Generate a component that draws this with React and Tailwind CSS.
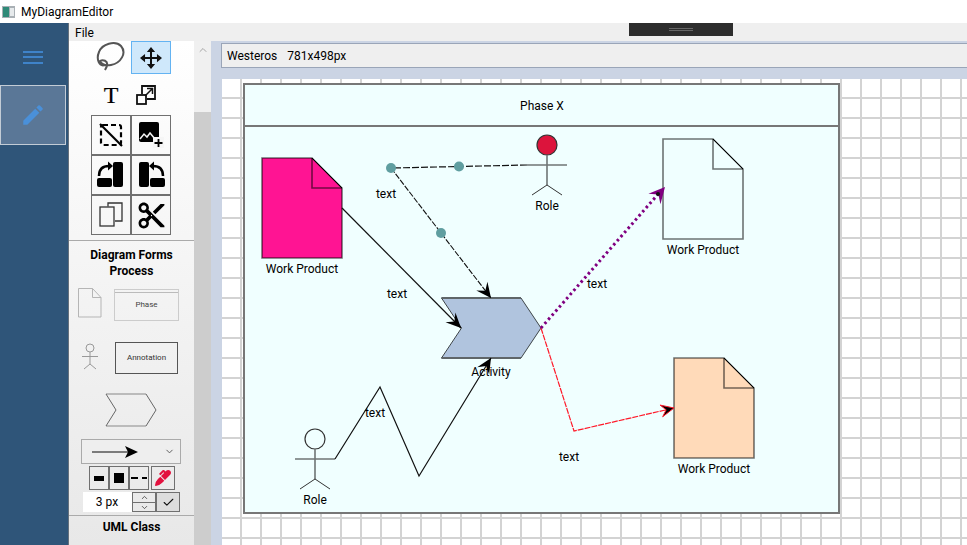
import { MdContentCut, MdEdit } from 'react-icons/md'
import { FaMarker } from 'react-icons/fa'
import { ChevronDown, ChevronUp, Check } from 'lucide-react'

const FONT = '[font-family:Roboto,"Noto_Sans",sans-serif]'

function arrowPoints(tx, ty, fx, fy, len = 15, half = 7) {
  const d = Math.hypot(tx - fx, ty - fy)
  const ux = (tx - fx) / d
  const uy = (ty - fy) / d
  const bx = tx - ux * len
  const by = ty - uy * len
  const nx = tx - ux * len * 0.62
  const ny = ty - uy * len * 0.62
  return `${tx},${ty} ${bx - uy * half},${by + ux * half} ${nx},${ny} ${bx + uy * half},${by - ux * half}`
}

function Doc({ x, y, fill }) {
  return (
    <g>
      <path d={`M${x} ${y}H${x + 50}L${x + 80} ${y + 30}V${y + 100}H${x}Z`} fill={fill} stroke="#000" strokeOpacity="0.55" strokeWidth="1.6" />
      <path d={`M${x + 50} ${y}V${y + 30}H${x + 80}`} fill="none" stroke="#000" strokeOpacity="0.55" strokeWidth="1.6" />
      <path d={`M${x + 50} ${y}L${x + 80} ${y + 30}`} stroke="#000" strokeWidth="1" />
    </g>
  )
}

function Actor({ x, y, fill }) {
  return (
    <g fill="none">
      <circle cx={x} cy={y} r="10" fill={fill} stroke="#333" strokeWidth="1.2" />
      <path d={`M${x} ${y + 10}V${y + 40}M${x - 20} ${y + 20}H${x + 20}`} stroke="#6f7676" strokeWidth="1.6" />
      <path d={`M${x - 15} ${y + 50}L${x} ${y + 40}L${x + 15} ${y + 50}`} stroke="#333" strokeWidth="1" />
    </g>
  )
}

function Diagram() {
  return (
    <svg className="absolute inset-0" width="745" height="466" viewBox="222 79 745 466">
      <rect x="244" y="84" width="595" height="429" fill="#f0ffff" stroke="#777" strokeWidth="2" />
      <path d="M244 126H839" stroke="#777" strokeWidth="2" />
      <Doc x={262} y={158} fill="#ff1493" />
      <Doc x={663} y={139} fill="none" />
      <Doc x={674} y={358} fill="#ffdab9" />
      <path d="M441.5 298H521L541 328L521 358H441.5L461.5 328Z" fill="#b0c4de" stroke="#3f4649" strokeWidth="1" />
      <path d="M441.5 298H521M441.5 358H521" stroke="#5f6669" strokeWidth="1.800" />
      <Actor x={547} y={145} fill="#dc143c" />
      <Actor x={315} y={439} fill="none" />

      <path d="M342 208L461 328" stroke="#111" strokeWidth="1.2" fill="none" />
      <polygon points={arrowPoints(461, 328, 342, 208)} fill="#000" />
      <path d="M527 165L459 166.5L391 168" stroke="#111" strokeWidth="1.2" strokeDasharray="7 2" fill="none" />
      <path d="M391 168L441 233L491 298" stroke="#111" strokeWidth="1.1" strokeDasharray="6 1.5" fill="none" />
      <polygon points={arrowPoints(491, 298, 441, 233)} fill="#000" />
      <circle cx="391" cy="168" r="5" fill="#5f9ea0" />
      <circle cx="459" cy="166.500" r="5" fill="#5f9ea0" />
      <circle cx="441" cy="233" r="5" fill="#5f9ea0" />

      <path d="M335 459L380 387L419 476L491 358" stroke="#111" strokeWidth="1.2" fill="none" />
      <polygon points={arrowPoints(491, 358, 419, 476)} fill="#000" />

      <path d="M541 328L574 431L674 408" stroke="#ff1a2a" strokeWidth="1.2" fill="none" strokeDasharray="6 1" />
      <polygon points={arrowPoints(674, 408, 574, 431, 13, 6)} fill="#000" stroke="#ff1a2a" />

      <path d="M541 328L660 192" stroke="#800080" strokeWidth="3" strokeDasharray="2.500 3" fill="none" />
      <polygon points={arrowPoints(665, 187, 541, 328, 16, 8)} fill="#800080" />
      <circle cx="658" cy="194" r="2" fill="#111" />
    </svg>
  )
}

function Label({ className, children }) {
  return (
    <span className={`absolute -translate-x-1/2 -translate-y-1/2 whitespace-nowrap text-[12px] leading-none text-black ${className}`}>
      {children}
    </span>
  )
}

function Cell({ children, className = '' }) {
  return (
    <div className={`flex h-[40px] w-[40px] items-center justify-center border border-[#707070] text-black ${className}`}>
      {children}
    </div>
  )
}

function Palette() {
  return (
    <div className="flex h-[504px] w-[125px] shrink-0 flex-col overflow-hidden bg-gradient-to-b from-white to-[#e8e8e8]">
      <div className="ml-[22px] flex h-[33px] w-[80px]">
        <div className="flex w-[40px] items-start justify-center">
          <svg width="40" height="30" viewBox="0 0 40 30" fill="none" stroke="#555" strokeWidth="2">
            <path d="M14 24C8 26 5 18 8 11C11 3 24 -1 30 5C36 12 30 22 20 24C15 25 11 24 9 20C12 18 17 20 16 24C16 26 15 27 14 29" />
          </svg>
        </div>
        <div className="flex w-[40px] items-center justify-center border border-[#63b3f2] bg-[#cfe8fb]">
          <svg width="22" height="22" viewBox="0 0 24 24">
            <path d="M12 3V21M3 12H21" stroke="#111" strokeWidth="2.200" />
            <path d="M12 0L7.500 5.500H16.500ZM12 24L7.500 18.500H16.500ZM0 12L5.500 7.500V16.500ZM24 12L18.500 7.500V16.500Z" fill="#111" />
          </svg>
        </div>
      </div>
      <div className="ml-[22px] flex h-[41px] w-[80px]">
        <div className="flex w-[40px] items-center justify-center font-['Liberation_Serif'] text-[24px] leading-none text-black [-webkit-text-stroke:0.2px_black]">T</div>
        <div className="flex w-[30px] items-center justify-center">
          <svg width="22" height="22" viewBox="0 0 22 22" fill="none" stroke="#111" strokeWidth="1.8">
            <path d="M7 10V2H20V15H12" />
            <rect x="2" y="11" width="9" height="9" />
            <path d="M10 12L17 5M12 4.500H17.500V10" strokeWidth="1.500" />
          </svg>
        </div>
      </div>
      <div className="ml-[22px] grid w-[80px] grid-cols-2">
        <Cell>
          <svg width="24" height="24" viewBox="0 0 24 24" fill="none" stroke="#000" strokeWidth="2.200">
            <rect x="2" y="2" width="20" height="20" rx="2" strokeDasharray="5 3" />
            <path d="M1 1L23 23" />
          </svg>
        </Cell>
        <Cell>
          <svg width="26" height="26" viewBox="0 0 26 26">
            <rect x="1" y="0" width="20" height="20" rx="2" fill="#000" />
            <path d="M2 17L6 12L9 15L12 11L17 17" fill="none" stroke="#f6f6f6" strokeWidth="1.500" />
            <rect x="15" y="15" width="11" height="11" fill="#f6f6f6" />
            <path d="M20.500 17V25M16.500 21H24.500" stroke="#000" strokeWidth="1.800" />
          </svg>
        </Cell>
        <Cell>
          <svg width="28" height="28" viewBox="0 0 28 28">
            <rect x="16" y="1" width="10" height="25" rx="2" />
            <rect x="0" y="17" width="15" height="9" rx="2" />
            <path d="M2 15C2 8 6 5 12 5" fill="none" stroke="#000" strokeWidth="2.500" />
            <path d="M11 0.500L16 5L11 9.500Z" />
          </svg>
        </Cell>
        <Cell>
          <svg width="28" height="28" viewBox="0 0 28 28">
            <rect x="2" y="1" width="10" height="25" rx="2" />
            <rect x="13" y="17" width="15" height="9" rx="2" />
            <path d="M26 15C26 8 22 5 16 5" fill="none" stroke="#000" strokeWidth="2.500" />
            <path d="M17 0.500L12 5L17 9.500Z" />
          </svg>
        </Cell>
        <Cell>
          <svg width="24" height="26" viewBox="0 0 24 26" fill="none" stroke="#333" strokeWidth="1.300">
            <path d="M9 4.500V1H23V19H16" />
            <rect x="1" y="5" width="14" height="19" />
          </svg>
        </Cell>
        <Cell><MdContentCut size={31} /></Cell>
      </div>
      <div className="mt-[5px] border-t border-[#aaaaaa]" />
      <div className="pt-[6px] text-center text-[12px] leading-[16px] font-bold text-black">
        <div>Diagram Forms</div>
        <div>Process</div>
      </div>
      <div className="mt-[9px] ml-[9px] flex items-start gap-[12px]">
        <svg width="24" height="30" viewBox="0 0 24 30" fill="none" stroke="#b5b5b5">
          <path d="M.5.500H14.500L23 9.500V29H.5Z" />
          <path d="M14.500.500V9.500H23" />
        </svg>
        <div className="mt-px flex h-[32px] w-[65px] flex-col border border-[#cccccc]">
          <div className="mt-[2px] border-t border-[#bbbbbb]" />
          <div className="flex flex-1 items-center justify-center pb-[3px] text-[8px] text-[#444444]">Phase</div>
        </div>
      </div>
      <div className="mt-[21px] ml-[12px] flex items-center gap-[16px]">
        <svg width="18" height="31" viewBox="0 0 18 31" fill="none" stroke="#999">
          <circle cx="9" cy="5" r="4" />
          <path d="M9 9V21M1 13.500H17" />
          <path d="M3 26L9 21L15 26" />
        </svg>
        <div className="flex h-[32px] w-[63px] items-center justify-center border border-[#555555] text-[8px] text-[#333333]">Annotation</div>
      </div>
      <svg className="mt-[19px] ml-[36px] shrink-0" width="52" height="34" viewBox="0 0 52 34" fill="none">
        <path d="M1 1H41" stroke="#aaa" strokeWidth="1.600" />
        <path d="M1 33H41" stroke="#aaa" strokeWidth="1.600" />
        <path d="M1 1L11 17L1 33M41 1L51 17L41 33" stroke="#666" />
      </svg>
      <div className="mt-[12px] ml-[12px] flex h-[25px] w-[100px] shrink-0 items-center border border-[#aaaaaa] bg-[#eeeeee]">
        <svg className="ml-[9px]" width="48" height="14" viewBox="0 0 48 14">
          <path d="M1 7H38" stroke="#555" strokeWidth="1.500" />
          <path d="M47 7L34 1L37 7L34 13Z" fill="#000" />
        </svg>
        <ChevronDown className="ml-auto mr-[5px]" size={11} color="#555" />
      </div>
      <div className="mt-[2px] ml-[20px] flex h-[24px] shrink-0">
        <div className="flex w-[20px] items-center justify-center border border-[#707070]"><div className="h-[5px] w-[10px] bg-black" /></div>
        <div className="flex w-[20px] items-center justify-center border border-[#707070]"><div className="h-[10px] w-[10px] bg-black" /></div>
        <div className="flex w-[20px] items-center justify-center gap-[4px] border border-[#707070]"><div className="h-[2px] w-[7px] bg-black" /><div className="h-[2px] w-[5px] bg-black" /></div>
        <div className="ml-[2px] flex w-[24px] items-center justify-center border border-[#707070]"><FaMarker size={16} color="#e3123f" /></div>
      </div>
      <div className="mt-[2px] ml-[14px] flex h-[20px] shrink-0">
        <div className="flex w-[49px] items-center justify-center bg-white pr-px text-[12px] text-black">3 px</div>
        <div className="flex w-[24px] flex-col border border-[#707070]">
          <div className="flex flex-1 items-center justify-center border-b border-[#707070]"><ChevronUp size={9} color="#333" /></div>
          <div className="flex flex-1 items-center justify-center"><ChevronDown size={9} color="#333" /></div>
        </div>
        <div className="flex w-[24px] items-center justify-center border border-[#707070] bg-[#dddddd]"><Check size={13} color="#111" /></div>
      </div>
      <div className="mt-[3px] border-t border-[#aaaaaa]" />
      <div className="pt-[3px] text-center text-[12px] leading-[16px] font-bold text-black">UML Class</div>
    </div>
  )
}

export default function App() {
  return (
    <div className={`relative flex h-[545px] w-[967px] flex-col overflow-hidden bg-white ${FONT}`}>
      {/* Title bar */}
      <div className="flex h-[23px] shrink-0 items-center bg-white pl-[2px] text-[12px] text-black">
        <svg width="13" height="12" viewBox="0 0 13 12">
          <rect width="13" height="12" fill="#a9b0b5" />
          <rect x="1" y="1" width="6" height="10" fill="#2f8a78" />
          <rect x="8" y="2" width="4" height="8" fill="#e6eaec" />
        </svg>
        <span className="ml-[6px] pt-px">MyDiagramEditor</span>
      </div>

      <div className="flex min-h-0 flex-1">
        {/* Sidebar */}
        <div className="flex w-[69px] shrink-0 flex-col border-r border-[#66717d] bg-[#2f5579]">
          <div className="flex h-[62px] w-[66px] flex-col items-center justify-center gap-[3.500px] pt-[6px]">
            <div className="h-[2px] w-[20px] bg-[#3f83c9]" />
            <div className="h-[2px] w-[20px] bg-[#3f83c9]" />
            <div className="h-[2px] w-[20px] bg-[#3f83c9]" />
          </div>
          <div className="flex h-[60px] w-[66px] items-center justify-center border border-[#c3ccd6] bg-[#5a7797]">
            <MdEdit size={26} color="#4a90d9" />
          </div>
        </div>

        <div className="flex min-w-0 flex-1 flex-col">
          {/* Menu */}
          <div className="flex h-[18px] shrink-0 items-center bg-[#efefef] pl-[6px] pt-px text-[12px] text-black">File</div>

          <div className="flex min-h-0 flex-1">
            <Palette />

            {/* Scrollbar */}
            <div className="flex w-[17px] shrink-0 flex-col bg-[#f0f0f0]">
              <div className="flex h-[71px] justify-center pt-[3px]"><ChevronUp size={12} color="#a6a6a6" /></div>
              <div className="flex-1 bg-[#cdcdcd]" />
            </div>

            {/* Canvas area */}
            <div className="flex min-w-0 flex-1 flex-col bg-[#cbd4e4]">
              <div className="mt-[2px] ml-[10px] flex h-[25px] shrink-0 items-center gap-[10px] border border-r-0 border-[#9aa5b8] bg-[#efefef] pl-[5px] text-[12px] text-black">
                <span>Westeros</span>
                <span>781x498px</span>
              </div>
              <div className="relative mt-[11px] ml-[11px] h-[466px] w-[745px] bg-white bg-[linear-gradient(to_right,transparent_18px,#d3d3d3_18px,#d3d3d3_20px),linear-gradient(to_bottom,transparent_18px,#d3d3d3_18px,#d3d3d3_20px)] bg-[size:20px_20px]">
                <Diagram />
                <Label className="left-[320px] top-[27px]">Phase X</Label>
                <Label className="left-[80px] top-[190px]">Work Product</Label>
                <Label className="left-[481px] top-[171px]">Work Product</Label>
                <Label className="left-[492px] top-[390px]">Work Product</Label>
                <Label className="left-[325px] top-[127px]">Role</Label>
                <Label className="left-[93px] top-[421px]">Role</Label>
                <Label className="left-[269px] top-[293px]">Activity</Label>
                <Label className="left-[164px] top-[115px]">text</Label>
                <Label className="left-[175px] top-[215px]">text</Label>
                <Label className="left-[375px] top-[205px]">text</Label>
                <Label className="left-[153px] top-[334px]">text</Label>
                <Label className="left-[347px] top-[378px]">text</Label>
              </div>
            </div>
          </div>
        </div>
      </div>

      {/* Floating toolbar handle */}
      <div className="absolute left-[629px] top-[23px] flex h-[13px] w-[104px] flex-col items-center justify-center gap-px bg-[#2d2d2d]">
        <div className="h-px w-[24px] bg-[#666666]" />
        <div className="h-px w-[24px] bg-[#666666]" />
      </div>
    </div>
  )
}
